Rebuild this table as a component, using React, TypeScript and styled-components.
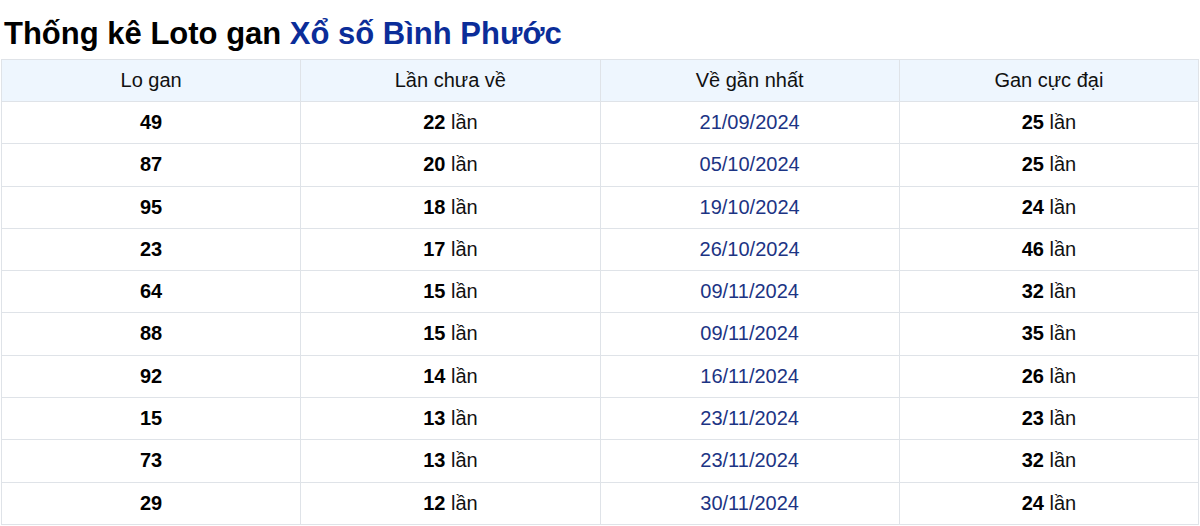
import React from 'react';
import styled, { createGlobalStyle } from 'styled-components';

const GlobalStyle = createGlobalStyle`
  body {
    margin: 0;
    background: #fff;
    font-family: "Liberation Sans", Arial, sans-serif;
  }
`;

const Page = styled.div`
  padding: 0 1px;
`;

const Title = styled.h2`
  margin: 0;
  padding: 16px 0 0 3px;
  height: 43px;
  box-sizing: border-box;
  font-size: 31px;
  line-height: 36px;
  font-weight: bold;
  color: #000;
  white-space: nowrap;
`;

const Province = styled.span`
  color: #0b2d99;
`;

const Table = styled.table`
  width: 100%;
  border-collapse: collapse;
  table-layout: fixed;
  margin-top: 16px;
  font-size: 20px;
`;

const HeadCell = styled.th`
  background: #eef6fe;
  border: 1px solid #dfe3e8;
  font-weight: normal;
  color: #111;
  padding: 8px 0;
  line-height: 25px;
  text-align: center;
`;

const Cell = styled.td<{ $date?: boolean }>`
  border: 1px solid #dfe3e8;
  padding: 8px 0;
  line-height: 25.3px;
  text-align: center;
  color: ${p => (p.$date ? '#1c3484' : '#111')};
`;

const Num = styled.b`
  color: #000;
`;

const rows: [string, number, string, number][] = [
  ['49', 22, '21/09/2024', 25],
  ['87', 20, '05/10/2024', 25],
  ['95', 18, '19/10/2024', 24],
  ['23', 17, '26/10/2024', 46],
  ['64', 15, '09/11/2024', 32],
  ['88', 15, '09/11/2024', 35],
  ['92', 14, '16/11/2024', 26],
  ['15', 13, '23/11/2024', 23],
  ['73', 13, '23/11/2024', 32],
  ['29', 12, '30/11/2024', 24],
];

const App = () => (
  <Page>
    <GlobalStyle />
    <Title>
      Thống kê Loto gan <Province>Xổ số Bình Phước</Province>
    </Title>
    <Table>
      <thead>
        <tr>
          <HeadCell>Lo gan</HeadCell>
          <HeadCell>Lần chưa về</HeadCell>
          <HeadCell>Về gần nhất</HeadCell>
          <HeadCell>Gan cực đại</HeadCell>
        </tr>
      </thead>
      <tbody>
        {rows.map(([lo, miss, date, max], i) => (
          <tr key={i}>
            <Cell><Num>{lo}</Num></Cell>
            <Cell><Num>{miss}</Num> lần</Cell>
            <Cell $date>{date}</Cell>
            <Cell><Num>{max}</Num> lần</Cell>
          </tr>
        ))}
      </tbody>
    </Table>
  </Page>
);

export default App;
